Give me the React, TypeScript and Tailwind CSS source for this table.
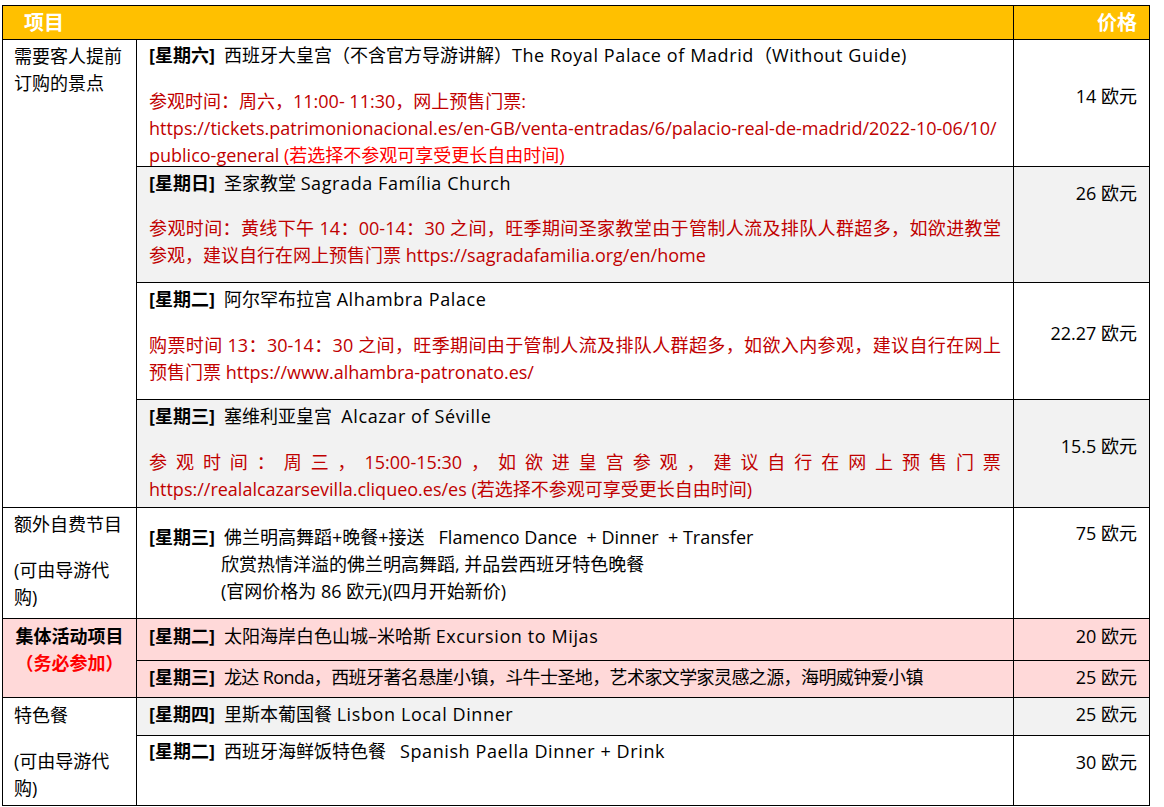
import React from 'react'

const Day = ({ d }: { d: string }) => <span className="font-bold mr-[9px]">[星期{d}]</span>

const En = ({ children }: { children: React.ReactNode }) => <span className="tracking-[0.6px]">{children}</span>

const spaced = ['参', '观', '时', '间', '：', '周', '三', '，', '15:00-15:30', '，', '如', '欲', '进', '皇', '宫', '参', '观', '，', '建', '议', '自', '行', '在', '网', '上', '预', '售', '门', '票']

export default function App() {
  const cell = 'border border-black align-top'
  const mid = `${cell} px-[12px]`
  const price = `${cell} text-right pr-[12px]`

  return (
    <div className="bg-white min-h-screen pt-[5px] pl-[2px] font-['Open_Sans','Noto_Sans_CJK_SC',sans-serif] text-[18px] leading-[27px] text-black">
      <table className="border-collapse table-fixed w-[1147px]">
        <colgroup>
          <col className="w-[134px]" />
          <col className="w-[877px]" />
          <col className="w-[136px]" />
        </colgroup>
        <thead>
          <tr className="h-[34px] bg-[#ffc000] text-white font-bold text-[20px]">
            <th colSpan={2} className="border border-black text-left pl-[21px] font-bold">项目</th>
            <th className="border border-black text-right pr-[12px] font-bold">价格</th>
          </tr>
        </thead>
        <tbody>
          <tr className="h-[127px]">
            <td rowSpan={4} className={`${cell} pl-[11px] pt-[3px]`}>
              需要客人提前
              <br />
              订购的景点
            </td>
            <td className={`${mid} pt-[2px]`}>
              <p className="whitespace-nowrap">
                <Day d="六" />西班牙大皇宫（不含官方导游讲解）<En>The Royal Palace of Madrid</En>（<En>Without Guide)</En>
              </p>
              <div className="mt-[19px] -mb-[5px] text-[#c00000] whitespace-nowrap">
                <p>参观时间：周六，11:00- 11:30，网上预售门票:</p>
                <p>https://tickets.patrimonionacional.es/en-GB/venta-entradas/6/palacio-real-de-madrid/2022-10-06/10/</p>
                <p>
                  publico-general <span className="text-[#ff0000]">(若选择不参观可享受更长自由时间)</span>
                </p>
              </div>
            </td>
            <td className={`${price} pt-[43px]`}>14 欧元</td>
          </tr>

          <tr className="h-[116px] bg-[#f2f2f2]">
            <td className={`${mid} pt-[3px]`}>
              <p>
                <Day d="日" />圣家教堂 <En>Sagrada Família Church</En>
              </p>
              <div className="mt-[18px] text-[#c00000]">
                <p className="[text-align-last:justify] whitespace-nowrap">
                  参观时间：黄线下午 14：00-14：30 之间，旺季期间圣家教堂由于管制人流及排队人群超多，如欲进教堂
                </p>
                <p>参观，建议自行在网上预售门票 https://sagradafamilia.org/en/home</p>
              </div>
            </td>
            <td className={`${price} pt-[13px]`}>26 欧元</td>
          </tr>

          <tr className="h-[117px]">
            <td className={`${mid} pt-[3px]`}>
              <p>
                <Day d="二" />阿尔罕布拉宫 <En>Alhambra Palace</En>
              </p>
              <div className="mt-[19px] text-[#c00000]">
                <p className="[text-align-last:justify] whitespace-nowrap">
                  购票时间 13：30-14：30 之间，旺季期间由于管制人流及排队人群超多，如欲入内参观，建议自行在网上
                </p>
                <p>预售门票 https://www.alhambra-patronato.es/</p>
              </div>
            </td>
            <td className={`${price} pt-[37px]`}>22.27 欧元</td>
          </tr>

          <tr className="h-[108px] bg-[#f2f2f2]">
            <td className={`${mid} pt-[3px]`}>
              <p>
                <Day d="三" />塞维利亚皇宫&nbsp; <En>Alcazar of Séville</En>
              </p>
              <div className="mt-[19px] -mb-[2px] text-[#c00000]">
                <p className="flex justify-between">
                  {spaced.map((t, i) => (
                    <span key={i}>{t}</span>
                  ))}
                </p>
                <p>https://realalcazarsevilla.cliqueo.es/es (若选择不参观可享受更长自由时间)</p>
              </div>
            </td>
            <td className={`${price} pt-[33px]`}>15.5 欧元</td>
          </tr>

          <tr className="h-[111px]">
            <td className={`${cell} pl-[11px] pt-[3px]`}>
              <p>额外自费节目</p>
              <p className="mt-[19px]">
                (可由导游代
                <br />
                购)
              </p>
            </td>
            <td className={`${mid} pt-[16px]`}>
              <p className="whitespace-nowrap">
                <Day d="三" />佛兰明高舞蹈+晚餐+接送&nbsp;&nbsp; Flamenco Dance&nbsp; + Dinner&nbsp; + Transfer
              </p>
              <p className="pl-[72px]">欣赏热情洋溢的佛兰明高舞蹈, 并品尝西班牙特色晚餐</p>
              <p className="pl-[72px]">(官网价格为 86 欧元)(四月开始新价)</p>
            </td>
            <td className={`${price} pt-[12px]`}>75 欧元</td>
          </tr>

          <tr className="h-[42px] bg-[#ffd9d9]">
            <td rowSpan={2} className={`${cell} text-center font-bold pt-[4px]`}>
              <p>集体活动项目</p>
              <p className="text-[#ff0000]">（务必参加）</p>
            </td>
            <td className={`${mid} pt-[4px]`}>
              <Day d="二" />太阳海岸白色山城–米哈斯 <En>Excursion to Mijas</En>
            </td>
            <td className={`${price} pt-[4px]`}>20 欧元</td>
          </tr>

          <tr className="h-[37px] bg-[#ffd9d9]">
            <td className={`${mid} pt-[3px] whitespace-nowrap`}>
              <Day d="三" />
              <span className="tracking-[-0.6px]">龙达 Ronda，西班牙著名悬崖小镇，斗牛士圣地，艺术家文学家灵感之源，海明威钟爱小镇</span>
            </td>
            <td className={`${price} pt-[3px]`}>25 欧元</td>
          </tr>

          <tr className="h-[38px]">
            <td rowSpan={2} className={`${cell} pl-[11px] pt-[4px]`}>
              <p>特色餐</p>
              <p className="mt-[19px]">
                (可由导游代
                <br />
                购)
              </p>
            </td>
            <td className={`${mid} pt-[3px] bg-[#f2f2f2]`}>
              <Day d="四" />里斯本葡国餐 <En>Lisbon Local Dinner</En>
            </td>
            <td className={`${price} pt-[3px] bg-[#f2f2f2]`}>25 欧元</td>
          </tr>

          <tr className="h-[70px]">
            <td className={`${mid} pt-[2px]`}>
              <Day d="二" />西班牙海鲜饭特色餐&nbsp;&nbsp; <En>Spanish Paella Dinner + Drink</En>
            </td>
            <td className={`${price} pt-[13px]`}>30 欧元</td>
          </tr>
        </tbody>
      </table>
    </div>
  )
}
